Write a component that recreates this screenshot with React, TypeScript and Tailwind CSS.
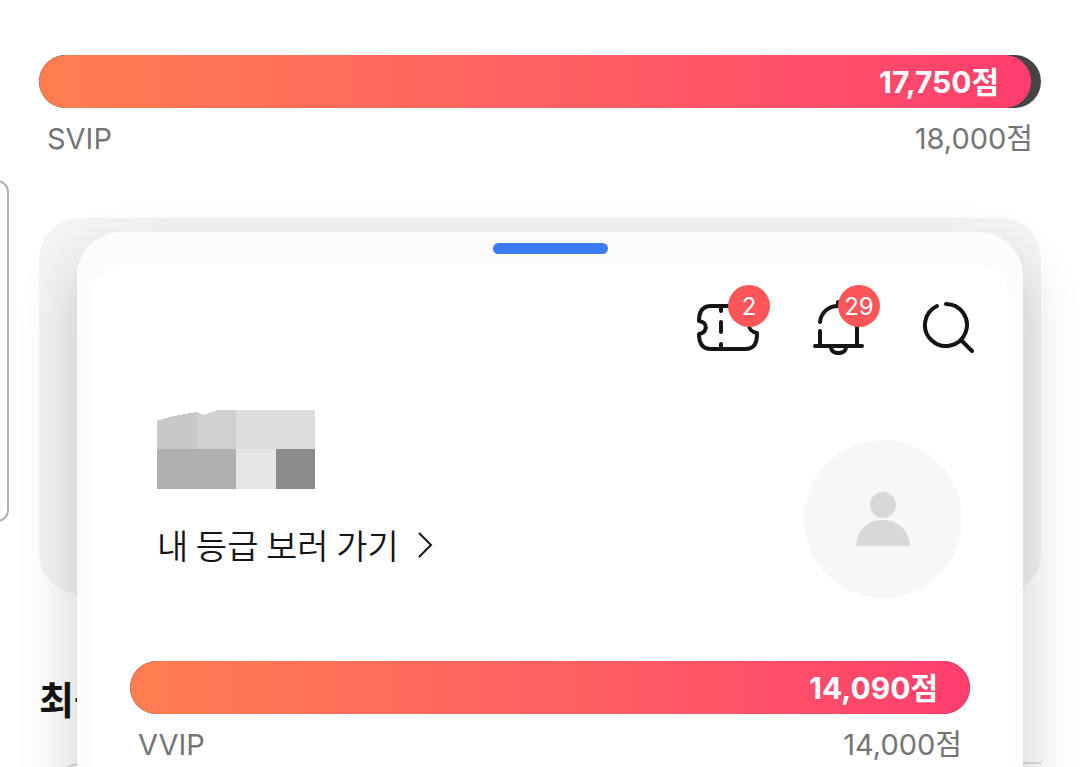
import type { ReactNode } from "react";

type PointsBarProps = {
  grade: string;
  points: number;
  goal: number;
};

function PointsBar({ grade, points, goal }: PointsBarProps) {
  const percent = Math.min(100, (points / goal) * 100);
  const width = percent < 100 ? `${percent + 0.4}%` : "100%";

  return (
    <div>
      <div
        role="progressbar"
        aria-label={`${grade} 점수`}
        aria-valuemin={0}
        aria-valuemax={goal}
        aria-valuenow={Math.min(points, goal)}
        className="h-[53px] overflow-hidden rounded-full bg-[#444444]"
      >
        <div
          className="flex h-full items-center justify-end rounded-full bg-linear-to-r from-[#ff7d50] to-[#ff3d6e] pt-px pr-8 text-[30px] font-bold text-white"
          style={{ width }}
        >
          {points.toLocaleString("en-US")}점
        </div>
      </div>
      <div className="mt-2 flex justify-between px-2 text-[29px] leading-[46px] text-[#757575]">
        <span>{grade}</span>
        <span>{goal.toLocaleString("en-US")}점</span>
      </div>
    </div>
  );
}

type IconButtonProps = {
  label: string;
  badge?: number;
  children: ReactNode;
};

function IconButton({ label, badge, children }: IconButtonProps) {
  return (
    <button type="button" aria-label={label} className="relative h-[70px]">
      {children}
      {badge !== undefined && (
        <span className="absolute top-0 left-full -ml-8 flex size-[42px] items-center justify-center rounded-full bg-[#fd5658] pt-px text-[24px] text-white">
          {badge}
        </span>
      )}
    </button>
  );
}

function TicketIcon() {
  return (
    <svg width="64" height="70" viewBox="0 0 64 70" fill="none" stroke="#151515" strokeWidth="4" strokeLinecap="round" strokeLinejoin="round">
      <path d="M15 21H50C57 21 61 25 61 31V35C51 34 50 46 61 48C61 59 58 64 49 64H15C7 64 3 59 3 49C12 47 12 37 3 36C3 26 7 21 15 21Z" />
      <path d="M25 22V26M25 37V47M25 59V63" />
    </svg>
  );
}

function BellIcon() {
  return (
    <svg width="58" height="70" viewBox="0 0 58 70" fill="none" stroke="#151515" strokeWidth="4" strokeLinecap="round">
      <path d="M8 37C9 28 16 21 26 21C37 21 45 29 45 39V61M8 46V61M26 21V17M3 61H50" />
      <path d="M19 62C19 70 34 70 34 62" />
    </svg>
  );
}

function SearchIcon() {
  return (
    <svg width="54" height="70" viewBox="0 0 54 70" fill="none" stroke="#151515" strokeWidth="4" strokeLinecap="round">
      <path d="M24 19A21 21 0 1 1 15 21M39 55L50 66" />
    </svg>
  );
}

function MaskedName() {
  return (
    <svg width="158" height="79" viewBox="0 0 158 79" shapeRendering="crispEdges" aria-hidden="true">
      <path d="M0 39V11Q8 7 40 2V39Z" fill="#c8c8c8" />
      <path d="M40 39V2L47 5L61 0H79V39Z" fill="#d0d0d0" />
      <path d="M79 0H158V39H79Z" fill="#dddddd" />
      <path d="M0 39H79V79H0Z" fill="#b0b0b0" />
      <path d="M79 39H119V79H79Z" fill="#e5e5e5" />
      <path d="M119 39H158V79H119Z" fill="#8b8b8b" />
    </svg>
  );
}

function Avatar() {
  return (
    <div className="flex size-[158px] items-center justify-center rounded-full bg-[#f7f7f7]">
      <svg width="54" height="54" viewBox="0 0 54 54" fill="#d8d8d8" aria-hidden="true">
        <circle cx="27" cy="13" r="13" />
        <path d="M0 54C1 38 12 28 27 28C42 28 53 38 54 54Z" />
      </svg>
    </div>
  );
}

function GradeSheet() {
  return (
    <section className="absolute top-[232px] right-[57px] bottom-0 left-[77px] overflow-clip rounded-t-[44px] bg-[#fcfcff] px-[14px]">
      <div className="mx-auto mt-[11px] h-[11px] w-[115px] rounded-full bg-[#3b7bf6]" />
      <div className="mt-[10px] min-h-full rounded-t-[32px] bg-white px-[39px] pt-[21px]">
        <header className="-mr-[6px] flex justify-end gap-[52px]">
          <IconButton label="쿠폰" badge={2}>
            <TicketIcon />
          </IconButton>
          <IconButton label="알림" badge={29}>
            <BellIcon />
          </IconButton>
          <IconButton label="검색">
            <SearchIcon />
          </IconButton>
        </header>

        <div className="mt-[55px] flex items-end justify-between pr-2 pl-[27px]">
          <div className="flex h-[188px] flex-col items-start">
            <MaskedName />
            <a
              href="#grade"
              className="mt-8 flex items-center gap-[18px] font-['Noto_Sans_CJK_KR',sans-serif] text-[34px] leading-[48px] font-[350] text-[#151515]"
            >
              내 등급 보러 가기
              <svg width="16" height="28" viewBox="0 0 16 28" fill="none" stroke="currentColor" strokeWidth="2" aria-hidden="true">
                <path d="M2 2L14 14L2 26" />
              </svg>
            </a>
          </div>
          <Avatar />
        </div>

        <div className="mt-[63px]">
          <PointsBar grade="VVIP" points={14090} goal={14000} />
        </div>
      </div>
    </section>
  );
}

export default function App() {
  return (
    <main className="relative h-screen overflow-hidden bg-white font-['Inter','Noto_Sans_CJK_KR',sans-serif]">
      <div className="px-[39px] pt-[55px]">
        <PointsBar grade="SVIP" points={17750} goal={18000} />
        <div className="mt-14 h-[376px] rounded-[40px] bg-[#f4f4f4]" />
        <h2 className="mt-20 text-[38px] leading-[52px] font-bold text-[#151515]">최근</h2>
        <div className="mt-9 h-40 rounded-tl-[48px] border-t-2 border-l-2 border-[#dddddd]" />
      </div>

      {/* edge of the neighbouring card */}
      <div className="absolute top-[180px] -left-10 h-[342px] w-[49px] rounded-xl border-2 border-[#b0b0b0]" />

      <div className="absolute top-[232px] right-[57px] -bottom-20 left-[77px] rounded-t-[44px] shadow-[0_28px_60px_rgba(0,0,0,0.2)]" />
      <GradeSheet />
    </main>
  );
}
